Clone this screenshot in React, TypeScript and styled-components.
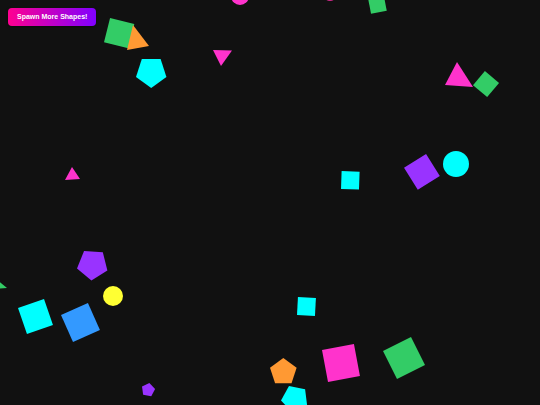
import React from "react";
import styled, { createGlobalStyle } from "styled-components";

const GlobalStyle = createGlobalStyle`
  html, body {
    margin: 0;
    padding: 0;
    background: #111111;
  }
  body {
    font-family: "Liberation Sans", Arial, sans-serif;
    overflow: hidden;
  }
`;

const Stage = styled.div`
  position: relative;
  width: 540px;
  height: 405px;
  box-sizing: border-box;
  padding: 8px;
  overflow: hidden;
  background: #111111;
`;

const SpawnButton = styled.button`
  position: relative;
  z-index: 2;
  display: block;
  height: 18px;
  padding: 0 9px;
  border: none;
  border-radius: 4px;
  background: linear-gradient(90deg, #ff0090 0%, #8000ff 100%);
  color: #ffffff;
  font-family: "Liberation Sans", Arial, sans-serif;
  font-weight: bold;
  font-size: 7px;
  line-height: 18px;
  white-space: nowrap;
  cursor: pointer;
  box-shadow: 0 1px 3px rgba(0, 0, 0, 0.4);
`;

const ShapeSvg = styled.svg<{ $left: number; $top: number }>`
  position: absolute;
  left: ${(p) => p.$left}px;
  top: ${(p) => p.$top}px;
  overflow: visible;
  display: block;
`;

type Pt = [number, number];

type ShapeDef =
  | { kind: "square"; x: number; y: number; size: number; rot: number; color: string }
  | { kind: "pentagon"; x: number; y: number; r: number; rot: number; color: string }
  | { kind: "circle"; x: number; y: number; r: number; color: string }
  | { kind: "triangle"; pts: Pt[]; color: string };

const C = {
  magenta: "#ff33cc",
  green: "#33cc66",
  orange: "#ff9933",
  cyan: "#00ffff",
  purple: "#9933ff",
  blue: "#3399ff",
  yellow: "#ffff33",
};

const shapes: ShapeDef[] = [
  { kind: "square", x: 119, y: 33, size: 25, rot: 14, color: C.green },
  { kind: "triangle", pts: [[133, 25], [149, 46], [127, 50]], color: C.orange },
  { kind: "pentagon", x: 151, y: 72, r: 16, rot: 180, color: C.cyan },
  { kind: "circle", x: 240, y: -4, r: 9, color: C.magenta },
  { kind: "circle", x: 330, y: -6, r: 7, color: "#d02a8a" },
  { kind: "square", x: 377, y: 4, size: 16, rot: -11, color: C.green },
  { kind: "triangle", pts: [[213, 50], [232, 50.5], [221, 66]], color: C.magenta },
  { kind: "triangle", pts: [[457, 62], [473, 87], [445, 85]], color: C.magenta },
  { kind: "square", x: 486, y: 84, size: 18.5, rot: 40, color: C.green },
  { kind: "square", x: 422, y: 172, size: 26, rot: -32, color: C.purple },
  { kind: "circle", x: 456, y: 164, r: 13, color: C.cyan },
  { kind: "square", x: 350, y: 180, size: 18, rot: 2, color: C.cyan },
  { kind: "triangle", pts: [[72, 167], [80, 179], [65, 180]], color: C.magenta },
  { kind: "pentagon", x: 93, y: 265, r: 16, rot: 184, color: C.purple },
  { kind: "circle", x: 113, y: 296, r: 10, color: C.yellow },
  { kind: "triangle", pts: [[-4, 279], [7, 288], [-6, 289]], color: C.green },
  { kind: "square", x: 35, y: 316, size: 27.5, rot: -19, color: C.cyan },
  { kind: "square", x: 80, y: 322, size: 29.5, rot: -24, color: C.blue },
  { kind: "square", x: 306, y: 306, size: 18, rot: 3, color: C.cyan },
  { kind: "square", x: 341, y: 363, size: 32.5, rot: -10.6, color: C.magenta },
  { kind: "square", x: 404, y: 358, size: 31.3, rot: -26.6, color: C.green },
  { kind: "pentagon", x: 283, y: 372, r: 14, rot: 0, color: C.orange },
  { kind: "pentagon", x: 295, y: 399, r: 14, rot: -25, color: C.cyan },
  { kind: "pentagon", x: 148, y: 390, r: 7, rot: 10, color: C.purple },
];

// regular polygon, angle measured clockwise from "up"
const regular = (x: number, y: number, r: number, n: number, rot: number): Pt[] =>
  Array.from({ length: n }, (_, i) => {
    const a = ((rot + (i * 360) / n) * Math.PI) / 180;
    return [x + r * Math.sin(a), y - r * Math.cos(a)] as Pt;
  });

const pointsOf = (s: ShapeDef): Pt[] => {
  switch (s.kind) {
    case "square":
      return regular(s.x, s.y, s.size / Math.SQRT2, 4, s.rot + 45);
    case "pentagon":
      return regular(s.x, s.y, s.r, 5, s.rot);
    case "triangle":
      return s.pts;
    default:
      return [];
  }
};

const Shape = ({ def }: { def: ShapeDef }) => {
  if (def.kind === "circle") {
    const d = def.r * 2;
    return (
      <ShapeSvg $left={def.x - def.r} $top={def.y - def.r} width={d} height={d} viewBox={`0 0 ${d} ${d}`}>
        <circle cx={def.r} cy={def.r} r={def.r} fill={def.color} />
      </ShapeSvg>
    );
  }
  const pts = pointsOf(def);
  const minX = Math.min(...pts.map((p) => p[0]));
  const minY = Math.min(...pts.map((p) => p[1]));
  const w = Math.max(...pts.map((p) => p[0])) - minX;
  const h = Math.max(...pts.map((p) => p[1])) - minY;
  const local = pts.map(([px, py]) => `${px - minX},${py - minY}`).join(" ");
  return (
    <ShapeSvg $left={minX} $top={minY} width={w} height={h} viewBox={`0 0 ${w} ${h}`}>
      <polygon points={local} fill={def.color} />
    </ShapeSvg>
  );
};

export default function App() {
  return (
    <>
      <GlobalStyle />
      <Stage>
        <SpawnButton>Spawn More Shapes!</SpawnButton>
        {shapes.map((s, i) => (
          <Shape key={i} def={s} />
        ))}
      </Stage>
    </>
  );
}
